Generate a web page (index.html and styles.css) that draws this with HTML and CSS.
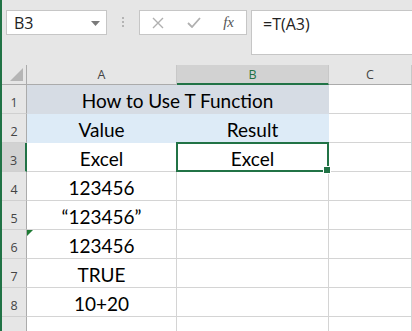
FILE: index.html
```html
<!DOCTYPE html>
<html>
<head>
  <title>T Function</title>
  <link rel="stylesheet" href="styles.css">
</head>
<body>
  <div class="app">
    <div class="toolbar">
      <div class="namebox">
        <span>B3</span>
        <svg class="caret" width="9" height="5" viewBox="0 0 9 5"><path d="M0 0h9L4.5 5z" fill="#7a7a7a"/></svg>
      </div>
      <div class="grip">
        <svg width="3" height="11" viewBox="0 0 3 11"><rect x="0" y="0" width="2" height="2" fill="#b4b4b4"/><rect x="0" y="4" width="2" height="2" fill="#b4b4b4"/><rect x="0" y="8" width="2" height="2" fill="#b4b4b4"/></svg>
      </div>
      <div class="fxbtns">
        <svg width="12" height="12" viewBox="0 0 12 12"><path d="M1 1l10 10M11 1L1 11" stroke="#b0b0b0" stroke-width="1.4" fill="none"/></svg>
        <svg width="14" height="11" viewBox="0 0 14 11"><path d="M1 6l4 4 8-9" stroke="#b0b0b0" stroke-width="1.8" fill="none"/></svg>
        <span class="fx">fx</span>
      </div>
      <div class="formula">=T(A3)</div>
    </div>

    <div class="sheet">
      <div class="hd corner"><span class="tri"></span></div>
      <div class="hd col">A</div>
      <div class="hd col sel">B</div>
      <div class="hd col">C</div>

      <div class="hd row">1</div>
      <div class="cell title">How to Use T Function</div>
      <div class="cell"></div>

      <div class="hd row">2</div>
      <div class="cell head">Value</div>
      <div class="cell head">Result</div>
      <div class="cell"></div>

      <div class="hd row sel">3</div>
      <div class="cell">Excel</div>
      <div class="cell active">Excel</div>
      <div class="cell"></div>

      <div class="hd row">4</div>
      <div class="cell">123456</div>
      <div class="cell"></div>
      <div class="cell"></div>

      <div class="hd row">5</div>
      <div class="cell">“123456”</div>
      <div class="cell"></div>
      <div class="cell"></div>

      <div class="hd row">6</div>
      <div class="cell flag">123456</div>
      <div class="cell"></div>
      <div class="cell"></div>

      <div class="hd row">7</div>
      <div class="cell">TRUE</div>
      <div class="cell"></div>
      <div class="cell"></div>

      <div class="hd row">8</div>
      <div class="cell">10+20</div>
      <div class="cell"></div>
      <div class="cell"></div>

      <div class="hd row"></div>
      <div class="cell"></div>
      <div class="cell"></div>
      <div class="cell"></div>
    </div>
  </div>
</body>
</html>
```

FILE: styles.css
```css
* { box-sizing: border-box; }
html, body { margin: 0; height: 100%; overflow: hidden; }
body { background: #e6e6e6; font-family: "Open Sans", "Noto Sans", sans-serif; }

.app { border-left: 2px solid #217346; height: 100%; }

/* formula bar */
.toolbar { display: flex; align-items: flex-start; padding: 10px 0 0 4px; height: 65px; }
.namebox { width: 101px; height: 25px; background: #fff; border: 1px solid #c6c6c6; display: flex; align-items: center; justify-content: space-between; padding: 0 6px 0 7px; font-size: 16px; color: #222; }
.caret { margin-top: 1px; }
.grip { width: 32px; height: 25px; display: flex; align-items: center; justify-content: center; }
.fxbtns { width: 108px; height: 25px; background: #fff; border: 1px solid #c6c6c6; display: flex; align-items: center; justify-content: space-between; padding: 0 12px 0 12px; }
.fx { font-family: "Liberation Serif", serif; font-style: italic; font-size: 15px; color: #555; }
.formula { flex: 1; margin-left: 4px; height: 45px; background: #fff; border: 1px solid #c6c6c6; border-right: none; padding: 2px 0 0 11px; font-size: 16px; color: #222; }

/* grid */
.sheet { display: grid; grid-template-columns: 25px 150px 152px 1fr; grid-template-rows: 20px repeat(8, 29px) 29px; background: #fff; }
.hd { background: #e6e6e6; color: #444; font-size: 12.5px; display: flex; justify-content: center; border-right: 1px solid #c8c8c8; border-bottom: 1px solid #c8c8c8; }
.corner { position: relative; border-right: 1px solid #ababab; border-bottom: 1px solid #ababab; }
.tri { position: absolute; right: 3px; bottom: 3px; width: 0; height: 0; border-left: 13px solid transparent; border-bottom: 13px solid #b5b5b5; }
.col { align-items: center; border-bottom: 1px solid #ababab; }
.col.sel { background: #d2d2d2; color: #217346; border-bottom: 2px solid #217346; }
.row { align-items: flex-end; padding-bottom: 2px; border-right: 1px solid #ababab; border-bottom: 1px solid #d0d0d0; }
.row.sel { background: #d2d2d2; border-right: 2px solid #217346; }

.cell { font-family: Lato, "Liberation Sans", sans-serif; font-size: 19px; color: #000; display: flex; align-items: center; justify-content: center; padding-top: 2px; border-right: 1px solid #d4d4d4; border-bottom: 1px solid #d4d4d4; position: relative; }
.title { grid-column: span 2; background: #d6dce4; border-color: #d6dce4; }
.head { background: #ddebf7; border-color: #ddebf7; }
.active::after { content: ""; position: absolute; left: -1px; top: -1px; right: -1px; bottom: -1px; border: 2px solid #217346; }
.active::before { content: ""; position: absolute; right: -3px; bottom: -3px; width: 6px; height: 6px; background: #217346; border: 1px solid #fff; z-index: 1; }
.flag::before { content: ""; position: absolute; left: 0; top: 0; border-top: 6px solid #1e7b34; border-right: 6px solid transparent; }
```
